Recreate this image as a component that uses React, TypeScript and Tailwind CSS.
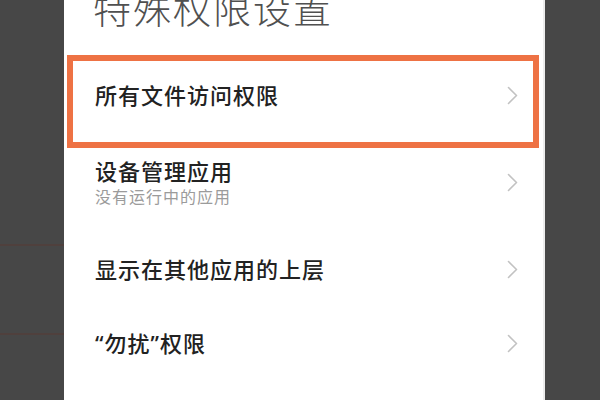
type Item = { title: string; sub?: string; h: string };

const items: Item[] = [
  { title: '所有文件访问权限', h: 'h-[74px]' },
  { title: '设备管理应用', sub: '没有运行中的应用', h: 'h-[100px]' },
  { title: '显示在其他应用的上层', h: 'h-[74px]' },
  { title: '“勿扰”权限', h: 'h-[74px]' },
];

function Arrow() {
  return (
    <svg width="11" height="19" viewBox="0 0 11 19" fill="none" className="shrink-0">
      <polyline points="1.5,1.5 9.5,9.5 1.5,17.5" stroke="#c2c2c2" strokeWidth="1.6" strokeLinecap="round" strokeLinejoin="round" />
    </svg>
  );
}

export default function App() {
  return (
    <div
      className="w-[600px] h-[400px] flex overflow-hidden bg-[#474747]"
      style={{ fontFamily: '"Noto Sans", "Noto Sans CJK SC", sans-serif' }}
    >
      <div className="w-[64px] shrink-0 flex flex-col">
        <div className="h-[244px]" />
        <div className="h-[2px] bg-[#4f403d]" />
        <div className="h-[87px]" />
        <div className="h-[2px] bg-[#4f403d]" />
      </div>

      <div className="relative w-[481px] shrink-0 bg-white border-r-2 border-[#ededed] overflow-hidden">
        <div className="pl-[29px] -mt-[11px] text-[38px] leading-none tracking-[2px] font-light text-[#505050]">
          特殊权限设置
        </div>

        <div className="mt-[31px] flex flex-col">
          {items.map((it) => (
            <div key={it.title} className={`${it.h} flex items-center justify-between pl-[31px] pr-[25px]`}>
              <div className="flex flex-col">
                <span className="text-[22px] leading-[22px] tracking-[1px] font-medium text-[#222222]">{it.title}</span>
                {it.sub && (
                  <span className="mt-[7px] text-[16px] leading-[16px] tracking-[1px] text-[#9b9b9b]">{it.sub}</span>
                )}
              </div>
              <Arrow />
            </div>
          ))}
        </div>

        <div className="absolute left-[3px] top-[55px] w-[472px] h-[93px] border-[6px] border-[#ee7244]" />
      </div>

      <div className="flex-1" />
    </div>
  );
}
